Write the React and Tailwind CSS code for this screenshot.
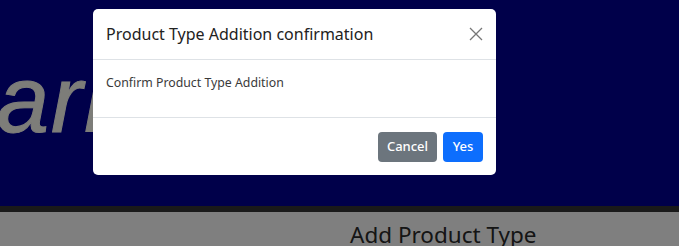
import { useState } from "react";

const App = () => {
  const [open, setOpen] = useState(true);

  return (
    <div className="relative h-[246px] w-[679px] overflow-hidden bg-white" style={{ fontFamily: '"Noto Sans", "Open Sans", sans-serif' }}>
      {/* Page behind the modal */}
      <div className="flex h-[206px] items-center bg-[#000094]">
        <h1 className="-ml-[68px] -mt-[6px] whitespace-nowrap text-[94px] italic leading-none tracking-[2px] text-[#fafaf2] [-webkit-text-stroke:1px_#fafaf2]" style={{ fontFamily: '"Liberation Sans", Arial, sans-serif' }}>
          Barnyard
        </h1>
      </div>
      <div className="h-[6px] bg-[#343434]"></div>
      <div className="flex pl-[350px] pt-[8px]">
        <h2 className="text-[22.5px] leading-[30px] text-[#2a2a2a]">Add Product Type</h2>
      </div>

      {/* Backdrop */}
      {open && <div className="absolute inset-0 bg-black/50"></div>}

      {/* Modal */}
      {open && (
        <div className="absolute left-[93px] top-[9px] flex w-[403px] flex-col rounded-[5px] bg-white text-[#212529]">
          <div className="flex h-[51px] items-center justify-between border-b border-[#dee2e6] pl-[13px] pr-[12px]">
            <h5 className="text-[16px] leading-none text-[#222]">Product Type Addition confirmation</h5>
            <button onClick={() => setOpen(false)} className="flex h-[16px] w-[16px] items-center justify-center text-[#777]">
              <svg width="14" height="14" viewBox="0 0 14 14" fill="none" stroke="currentColor" strokeWidth="1.3">
                <path d="M1 1L13 13M13 1L1 13" />
              </svg>
            </button>
          </div>
          <div className="h-[58px] border-b border-[#dee2e6] px-[13px] pt-[13px]">
            <p className="text-[12.3px] leading-[20px] text-[#3a3a3a]">Confirm Product Type Addition</p>
          </div>
          <div className="flex h-[57px] items-center justify-end gap-[6px] pr-[13px]">
            <button onClick={() => setOpen(false)} className="h-[30px] w-[59px] rounded-[4px] bg-[#6c757d] text-[13px] font-medium text-white">
              Cancel
            </button>
            <button onClick={() => setOpen(false)} className="h-[30px] w-[40px] rounded-[4px] bg-[#0d6efd] text-[13px] font-medium text-white">
              Yes
            </button>
          </div>
        </div>
      )}
    </div>
  );
};

export default App;
